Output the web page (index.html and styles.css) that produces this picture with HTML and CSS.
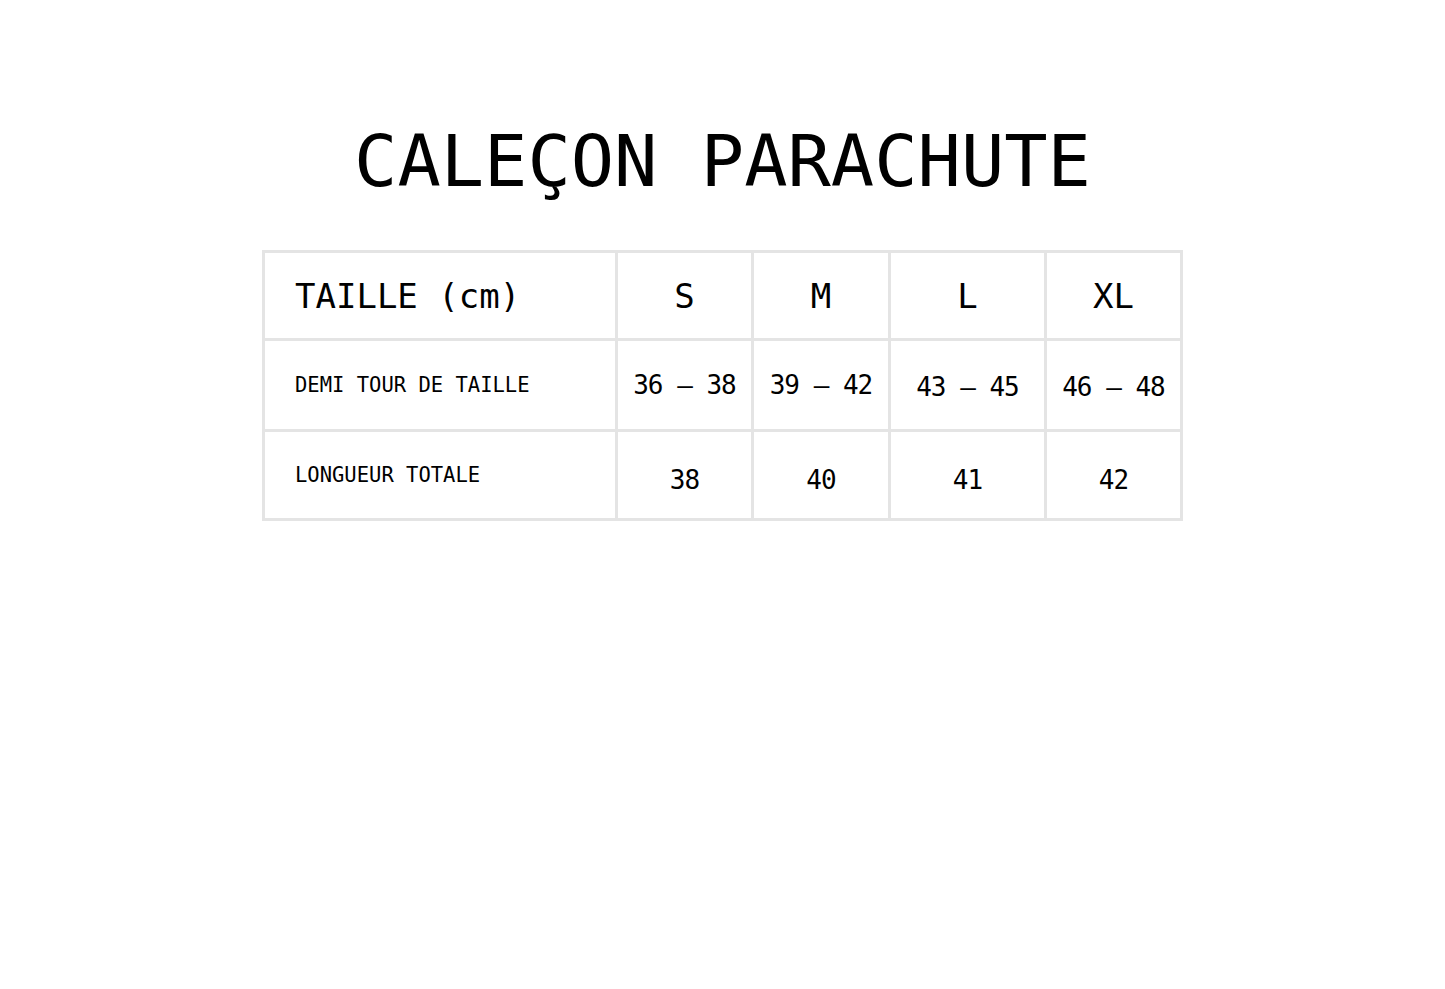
FILE: index.html
```html
<!DOCTYPE html>
<html lang="fr">
<head>
<meta charset="utf-8">
<title>Caleçon Parachute</title>
<link rel="stylesheet" href="styles.css">
</head>
<body>
<main class="page">
  <h1 class="title">CALEÇON PARACHUTE</h1>
  <div class="chart">
    <div class="cell label head">TAILLE (cm)</div>
    <div class="cell size">S</div>
    <div class="cell size">M</div>
    <div class="cell size">L</div>
    <div class="cell size">XL</div>

    <div class="cell label">DEMI TOUR DE TAILLE</div>
    <div class="cell num">36 – 38</div>
    <div class="cell num">39 – 42</div>
    <div class="cell num low">43 – 45</div>
    <div class="cell num low">46 – 48</div>

    <div class="cell label">LONGUEUR TOTALE</div>
    <div class="cell num last">38</div>
    <div class="cell num last">40</div>
    <div class="cell num last">41</div>
    <div class="cell num last">42</div>
  </div>
</main>
</body>
</html>
```
FILE: styles.css
```css
html, body {
  margin: 0;
  padding: 0;
  background: #ffffff;
}

.page {
  width: 1445px;
  min-height: 989px;
  padding-top: 125px;
  box-sizing: border-box;
  display: flex;
  flex-direction: column;
  align-items: center;
  font-family: "DejaVu Sans Mono", "Liberation Mono", monospace;
  color: #000;
}

.title {
  margin: 0;
  font-size: 72px;
  line-height: 72px;
  font-weight: normal;
  letter-spacing: 0;
  white-space: nowrap;
}

.chart {
  margin-top: 53px;
  display: grid;
  grid-template-columns: 350px 133px 134px 153px 133px;
  grid-template-rows: 85px 88px 86px;
  gap: 3px;
  padding: 3px;
  background: #e4e4e4;
}

.cell {
  background: #fff;
  display: flex;
  align-items: center;
  white-space: nowrap;
}

.label {
  padding-left: 30px;
  font-size: 20.5px;
}

.label.head {
  font-size: 34px;
}

.size {
  justify-content: center;
  font-size: 34px;
}

.num {
  justify-content: center;
  font-size: 26px;
  letter-spacing: -1px;
}

.num.low {
  padding-top: 3px;
}

.num.last {
  padding-top: 10px;
}
```
